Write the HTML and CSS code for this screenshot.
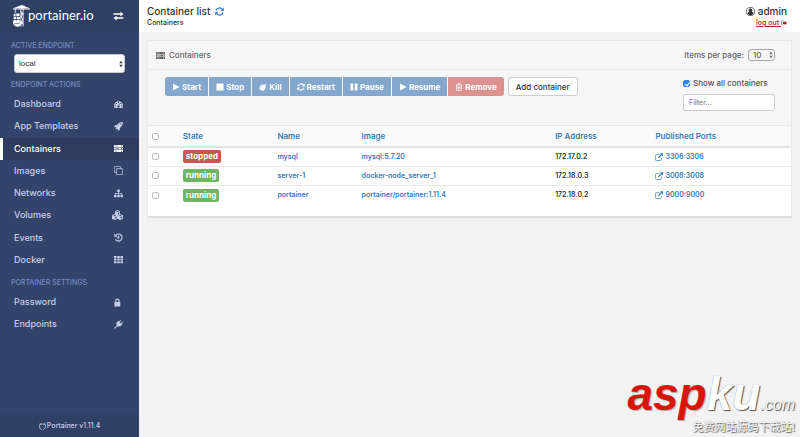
FILE: index.html
```html
<!DOCTYPE html>
<html lang="en">
<head>
<meta charset="utf-8">
<title>Portainer - Container list</title>
<link rel="stylesheet" href="styles.css">
</head>
<body>
<svg class="sprite" aria-hidden="true">
  <symbol id="i-swap" viewBox="0 0 16 16"><path d="M0 3.500h11V1l5 3.800-5 3.800V6H0zM16 12.500H5V15l-5-3.800 5-3.800V10h11z"/></symbol>
  <symbol id="i-dash" viewBox="0 0 16 16"><path fill-rule="evenodd" d="M8 2a8 8 0 0 0-8 8c0 1.600.5 3 1.200 4.300h13.600C15.500 13 16 11.600 16 10a8 8 0 0 0-8-8zM8 3.200a1.100 1.100 0 1 1 0 2.200 1.100 1.100 0 0 1 0-2.200zM4 5a1.100 1.100 0 1 1 0 2.200A1.100 1.100 0 0 1 4 5zm8 0a1.100 1.100 0 1 1 0 2.200A1.100 1.100 0 0 1 12 5zM2.300 9a1.100 1.100 0 1 1 0 2.200 1.100 1.100 0 0 1 0-2.200zm11.400 0a1.100 1.100 0 1 1 0 2.200 1.100 1.100 0 0 1 0-2.200zM9 6.400l1 .3-.9 3.400a1.900 1.900 0 1 1-1-.3z"/></symbol>
  <symbol id="i-rocket" viewBox="0 0 16 16"><path fill-rule="evenodd" d="M15.800.2C11 0 8.500 1.800 5.800 5.200L2.500 5.500 0 9.300l3.300-.2.700.9-1.500 3.500L6 12l.9.700-.2 3.300 3.800-2.500.3-3.300C14.200 7.500 16 5 15.800.2zM12.500 2.400a1.200 1.200 0 1 1 0 2.400 1.200 1.200 0 0 1 0-2.400z"/></symbol>
  <symbol id="i-server" viewBox="0 0 18 16"><path fill-rule="evenodd" d="M0 1h18v4H0zm0 5h18v4H0zm0 5h18v4H0zM2 2.500v1h5v-1zm0 5v1h8v-1zm0 5v1h5v-1zM15 2a1 1 0 1 0 0 2 1 1 0 0 0 0-2zm0 5a1 1 0 1 0 0 2 1 1 0 0 0 0-2zm0 5a1 1 0 1 0 0 2 1 1 0 0 0 0-2z"/></symbol>
  <symbol id="i-copy" viewBox="0 0 16 16"><path fill="none" stroke="currentColor" stroke-width="1.300" d="M4.500 11.500H1.200a.6.600 0 0 1-.6-.6V1.200c0-.3.300-.6.600-.6h9.600c.4 0 .7.300.7.600v3.300M5.200 4.600h9.500c.4 0 .7.300.7.600v9.500c0 .4-.3.700-.7.700H5.200a.6.600 0 0 1-.7-.7V5.200c0-.3.300-.6.700-.6z"/></symbol>
  <symbol id="i-tree" viewBox="0 0 16 16"><path d="M5.800 1h4.400v4.200H8.700v2.100h5.700v3.200H16v4.200h-4.500v-4.200h1.600V8.600H8.700v1.900h1.500v4.200H5.800v-4.200h1.500V8.600H2.900v1.900h1.600v4.200H0v-4.200h1.600V7.300h5.700V5.200H5.800z"/></symbol>
  <symbol id="i-cubes" viewBox="0 0 18 16"><path fill-rule="evenodd" d="M9 0l4 1.700v4.600l5 2.200V14l-4.500 2L9 14l-4.500 2L0 14V8.500l5-2.200V1.700zM9 1.300L6.500 2.400 9 3.500l2.500-1.100zM9.700 4.700v2.800l2-.9V3.800zM4.500 8L2 9.100l2.500 1.100L7 9.100zm9 0L11 9.100l2.500 1.100L16 9.100zM5.200 11.400v2.800l2.500-1.100v-2.800zm9 0v2.800l2.500-1.100v-2.800z"/></symbol>
  <symbol id="i-history" viewBox="0 0 16 16"><path fill="none" stroke="currentColor" stroke-width="2" d="M3 4.200A6.300 6.300 0 1 1 2.600 11.300M8.300 4.500v4.200H5.200"/><path d="M.5 1v5.600h5.700z"/></symbol>
  <symbol id="i-grid" viewBox="0 0 18 16"><path d="M0 1h5v4H0zm6.500 0h5v4h-5zM13 1h5v4h-5zM0 6.200h5v4H0zm6.500 0h5v4h-5zm6.500 0h5v4h-5zM0 11.400h5v4H0zm6.500 0h5v4h-5zm6.500 0h5v4h-5z"/></symbol>
  <symbol id="i-lock" viewBox="0 0 16 16"><path fill-rule="evenodd" d="M2 7V5a4 4 0 0 1 8 0v2h1.200v8H.8V7zm2 0h4V5a2 2 0 0 0-4 0z"/></symbol>
  <symbol id="i-plug" viewBox="0 0 16 16"><path d="M11.200 0l1.300 1.300-2.700 2.600 2.300 2.300 2.600-2.700L16 4.800l-2.600 2.700 1 1-1.200 1.300c-2 2-4.800 2.400-7 1.300L3 14.300C2 15.300 1 15.500 0 16c.5-1 .7-2 1.700-3l3.200-3.200c-1.100-2.200-.7-5 1.300-7l1.300-1.200 1 1z"/></symbol>
  <symbol id="i-cat" viewBox="0 0 16 16"><path fill="none" stroke="currentColor" stroke-width="2.200" d="M6 14.700C2.800 13.600 1.200 11.200 1.200 8.300c0-1.900.5-2.900 1.200-4L2.300 1.500l2.800 1.200c2-.5 3.800-.5 5.800 0l2.800-1.200-.1 2.800c.7 1.100 1.200 2.100 1.200 4 0 2.900-1.600 5.300-4.800 6.400"/></symbol>
  <symbol id="i-refresh" viewBox="0 0 16 16"><path fill="none" stroke="currentColor" stroke-width="2.200" d="M1.700 6.600a6.500 6.500 0 0 1 11.400-2.400M14.300 9.400A6.500 6.500 0 0 1 2.900 11.800"/><path d="M15.700 1v6H9.800zM.3 15V9h5.900z"/></symbol>
  <symbol id="i-play" viewBox="0 0 14 16"><path d="M1 1l13 7-13 7z"/></symbol>
  <symbol id="i-stop" viewBox="0 0 16 16"><path d="M1 1h14v14H1z"/></symbol>
  <symbol id="i-bomb" viewBox="0 0 16 16"><path fill-rule="evenodd" d="M9.700 3.500l1.100-1.100 1.200 1.100 1.200-1.200.7.700-1.200 1.200 1.100 1.100-1.100 1.200A6.300 6.300 0 1 1 9.700 3.500zM2.700 9.200h1.200c0-1.800 1.200-3 3-3V5C4.500 5 2.700 6.800 2.700 9.200z"/><path d="M13.300 0h.8v1.700h-.8zM14.500 2l1-1 .5.500-1 1zM14.600 3h1.400v.8h-1.400z"/></symbol>
  <symbol id="i-pause" viewBox="0 0 16 16"><path d="M1 1h5.500v14H1zm8.500 0H15v14H9.500z"/></symbol>
  <symbol id="i-trash" viewBox="0 0 16 16"><path fill="none" stroke="currentColor" stroke-width="1.500" d="M1.500 3.700h13M5.500 3.400l.8-2.300h3.400l.8 2.300M3 4v10.200c0 .6.300 1 .8 1h8.400c.5 0 .8-.4.800-1V4M6 6.500v6M8 6.500v6M10 6.500v6"/></symbol>
  <symbol id="i-user" viewBox="0 0 16 16"><circle cx="8" cy="8" r="7.200" fill="none" stroke="currentColor" stroke-width="1.300"/><path d="M8 2.700a3.200 3.200 0 0 1 2 5.800c2 .2 3 1.500 3.200 3.700a7 7 0 0 1-10.400 0C3 10 4 8.700 6 8.500a3.200 3.200 0 0 1 2-5.800z"/></symbol>
  <symbol id="i-out" viewBox="0 0 16 16"><path fill="none" stroke="currentColor" stroke-width="1.500" d="M6.500 2.500H3A2 2 0 0 0 1 4.500v7a2 2 0 0 0 2 2h3.500"/><path d="M10 2l6 6-6 6v-3.500H5v-5h5z"/></symbol>
  <symbol id="i-ext" viewBox="0 0 16 16"><path fill="none" stroke="currentColor" stroke-width="1.400" d="M9 3.200H3A2.200 2.200 0 0 0 .8 5.400v7.400A2.200 2.200 0 0 0 3 15h7.500a2.200 2.200 0 0 0 2.200-2.200V9.500"/><path d="M10 .5h6v6l-2.100-2.100-6.300 6.300-1.700-1.700 6.300-6.300z"/></symbol>
  <symbol id="i-arrows" viewBox="0 0 6 10"><path d="M3 0l2.500 4h-5zM3 10L.5 6h5z"/></symbol>
</svg>

<div class="app">
  <aside class="sidebar">
    <div class="brand">
      <a class="logo" href="#" aria-label="portainer.io">
        <svg class="crane" viewBox="0 0 26 34" fill="none" stroke="#fff" aria-hidden="true">
          <path stroke-width="1.200" d="M0 6.500h26M1 5.500L13 1l12 4.500M13 0v6M16.500 0v6M12 6v27M15.500 6v27M12 10l3.500 4L12 18l3.500 4-3.500 4 3.500 4M3.500 6.500V13"/>
          <path fill="#fff" stroke="none" d="M1 14h3v3H1zm4-1h5v4H5zM1 18h4v4H1zm5 0h5v4H6zM0 25c2-3 4-2 5-1 2-2 5-1 6 1 2 0 3 2 2 4-1 4-5 5-8 4-3-1-6-4-5-8z"/>
          <path stroke="#33446b" d="M2 28c3 1 6 1 9-1"/>
        </svg>
        <span>portainer.io</span>
      </a>
      <svg class="icon wide"><use href="#i-swap"/></svg>
    </div>
    <label class="side-title" for="endpoint">ACTIVE ENDPOINT</label>
    <div class="select endpoint">
      <select id="endpoint"><option>local</option></select>
      <svg class="arrows"><use href="#i-arrows"/></svg>
    </div>
    <h2 class="side-title">ENDPOINT ACTIONS</h2>
    <nav class="menu menu-main">
      <a href="#">Dashboard<svg class="icon"><use href="#i-dash"/></svg></a>
      <a href="#">App Templates<svg class="icon"><use href="#i-rocket"/></svg></a>
      <a href="#" class="active">Containers<svg class="icon"><use href="#i-server"/></svg></a>
      <a href="#">Images<svg class="icon"><use href="#i-copy"/></svg></a>
      <a href="#">Networks<svg class="icon"><use href="#i-tree"/></svg></a>
      <a href="#">Volumes<svg class="icon wide"><use href="#i-cubes"/></svg></a>
      <a href="#">Events<svg class="icon"><use href="#i-history"/></svg></a>
      <a href="#">Docker<svg class="icon"><use href="#i-grid"/></svg></a>
    </nav>
    <h2 class="side-title">PORTAINER SETTINGS</h2>
    <nav class="menu">
      <a href="#">Password<svg class="icon"><use href="#i-lock"/></svg></a>
      <a href="#">Endpoints<svg class="icon"><use href="#i-plug"/></svg></a>
    </nav>
    <footer class="version"><svg class="icon-s"><use href="#i-cat"/></svg>Portainer v1.11.4</footer>
  </aside>

  <main class="main">
    <header class="top">
      <div>
        <h1>Container list <a href="#" aria-label="Refresh"><svg class="icon"><use href="#i-refresh"/></svg></a></h1>
        <div class="crumb">Containers</div>
      </div>
      <div class="account">
        <div class="user"><svg class="icon"><use href="#i-user"/></svg>admin</div>
        <a class="logout" href="#">log out <svg class="icon-s"><use href="#i-out"/></svg></a>
      </div>
    </header>

    <section class="panel">
      <div class="panel-head">
        <h2><svg class="icon"><use href="#i-server"/></svg>Containers</h2>
        <div class="paging">
          <label for="per-page">Items per page:</label>
          <div class="select per-page">
            <select id="per-page"><option>10</option></select>
            <svg class="arrows"><use href="#i-arrows"/></svg>
          </div>
        </div>
      </div>
      <div class="toolbar">
        <div class="actions">
          <div class="group">
            <button type="button" disabled><svg class="icon-s"><use href="#i-play"/></svg>Start</button>
            <button type="button" disabled><svg class="icon-s"><use href="#i-stop"/></svg>Stop</button>
            <button type="button" disabled><svg class="icon-s"><use href="#i-bomb"/></svg>Kill</button>
            <button type="button" disabled><svg class="icon-s"><use href="#i-refresh"/></svg>Restart</button>
            <button type="button" disabled><svg class="icon-s"><use href="#i-pause"/></svg>Pause</button>
            <button type="button" disabled><svg class="icon-s"><use href="#i-play"/></svg>Resume</button>
            <button type="button" disabled class="danger"><svg class="icon-s"><use href="#i-trash"/></svg>Remove</button>
          </div>
          <button type="button" class="add">Add container</button>
        </div>
        <div class="filters">
          <label><input type="checkbox" checked>Show all containers</label>
          <input type="text" placeholder="Filter..." aria-label="Filter">
        </div>
      </div>
      <table>
        <thead>
          <tr>
            <th class="c-check"><input type="checkbox" aria-label="Select all"></th>
            <th class="c-state"><a href="#">State</a></th>
            <th class="c-name"><a href="#">Name</a></th>
            <th class="c-image"><a href="#">Image</a></th>
            <th class="c-ip"><a href="#">IP Address</a></th>
            <th><a href="#">Published Ports</a></th>
          </tr>
        </thead>
        <tbody>
          <tr>
            <td><input type="checkbox" aria-label="Select mysql"></td>
            <td><span class="badge stopped">stopped</span></td>
            <td><a href="#">mysql</a></td>
            <td><a href="#">mysql:5.7.20</a></td>
            <td>172.17.0.2</td>
            <td><a href="#"><svg class="icon-s"><use href="#i-ext"/></svg>3306:3306</a></td>
          </tr>
          <tr>
            <td><input type="checkbox" aria-label="Select server-1"></td>
            <td><span class="badge">running</span></td>
            <td><a href="#">server-1</a></td>
            <td><a href="#">docker-node_server_1</a></td>
            <td>172.18.0.3</td>
            <td><a href="#"><svg class="icon-s"><use href="#i-ext"/></svg>3008:3008</a></td>
          </tr>
          <tr>
            <td><input type="checkbox" aria-label="Select portainer"></td>
            <td><span class="badge">running</span></td>
            <td><a href="#">portainer</a></td>
            <td><a href="#">portainer/portainer:1.11.4</a></td>
            <td>172.18.0.2</td>
            <td><a href="#"><svg class="icon-s"><use href="#i-ext"/></svg>9000:9000</a></td>
          </tr>
        </tbody>
      </table>
    </section>
  </main>
</div>

<div class="watermark">
  <div class="wm-name"><span class="wm-red">asp</span><span class="wm-white">ku</span><span class="wm-com">.com</span></div>
  <div class="wm-text" lang="zh-CN">免费网站源码下载站!</div>
</div>
</body>
</html>
```

FILE: styles.css
```css
* { box-sizing: border-box; }

body {
  margin: 0;
  background: #f2f2f2;
  color: #333;
  font: 500 8px/12px Inter, "Liberation Sans", sans-serif;
}

h1, h2 { margin: 0; font: inherit; }
a { color: #337ab7; text-decoration: none; }
button, input, select { margin: 0; font: inherit; color: inherit; }
svg { fill: currentColor; flex: none; }
.sprite { display: none; }
.icon { width: 9px; height: 9px; }
.icon.wide { width: 11px; height: 10px; }
.icon-s { width: 8px; height: 8px; vertical-align: middle; }

.app { display: flex; min-height: 100vh; }

/* Sidebar */
.sidebar {
  display: flex;
  flex-direction: column;
  width: 139px;
  flex: none;
  background: #33446b;
  color: #c4cfea;
}
.brand {
  display: flex;
  align-items: center;
  justify-content: space-between;
  height: 32px;
  margin-bottom: 2px;
  padding: 0 15px 0 13px;
  background: #2f4065;
  color: #fff;
}
.logo { display: flex; align-items: flex-start; color: #fff; font: 13px/22px Lato, sans-serif; }
.logo span { margin-left: -2px; }
.crane { width: 17px; height: 24px; }
.side-title { padding: 6px 11px 2px; color: #738bc0; font-size: 7px; line-height: 12px; }
.select { display: flex; align-items: center; position: relative; }
.select select {
  appearance: none;
  width: 100%;
  padding: 0 5px;
  border: 1px solid #ccc;
  border-radius: 3px;
  background: #fff;
  outline: 0;
}
.arrows { position: absolute; right: 2px; width: 4px; height: 8px; pointer-events: none; }
.endpoint { margin: 0 14px; color: #333; }
.endpoint select { height: 19px; font: 8px "Liberation Sans", sans-serif; padding: 0 4px; }
.menu { display: grid; grid-auto-rows: 22px; padding-bottom: 2px; }
.menu-main { grid-auto-rows: 1fr; height: 178px; padding: 0; }
.menu a {
  display: flex;
  align-items: center;
  justify-content: space-between;
  padding: 0 16px 0 11px;
  border-left: 3px solid transparent;
  color: inherit;
  font-size: 9px;
}
.menu a.active { border-color: #fff; background: #2d3c5f; color: #fff; }
.version {
  display: flex;
  align-items: center;
  justify-content: center;
  gap: 1px;
  height: 22px;
  margin-top: auto;
  background: #2f4065;
  font-size: 7px;
}
.version .icon-s { width: 7px; height: 7px; }

/* Page header */
.main { flex: 1; min-width: 0; }
.top {
  display: flex;
  justify-content: space-between;
  height: 32px;
  padding: 5px 13px 0 8px;
  background: #fff;
}
h1 { display: flex; align-items: center; gap: 5px; font-size: 10px; }
h1 a { display: flex; }
.crumb { font-size: 7px; }
.account { text-align: right; }
.user { display: flex; align-items: center; gap: 3px; font-size: 10px; }
.logout { color: #a02622; font-size: 7px; text-decoration: underline; display: block; }
.logout .icon-s { width: 6px; }

/* Container list */
.panel {
  margin: 8px;
  padding-bottom: 11px;
  border: 1px solid #e9e9e9;
  border-bottom: 2px solid #e0e0e0;
  background: #fff;
}
.panel-head {
  display: flex;
  align-items: center;
  justify-content: space-between;
  height: 29px;
  padding: 0 16px 0 8px;
  border-bottom: 1px solid #e9e9e9;
  background: #f6f6f6;
  color: #666;
}
.panel-head h2, .paging { display: flex; align-items: center; gap: 4px; }
.per-page { width: 27px; }
.per-page select { height: 12px; border-color: #aaa; background: #f6f6f6; padding: 0 4px; line-height: 10px; }
.toolbar {
  display: flex;
  justify-content: space-between;
  align-items: flex-start;
  height: 56px;
  padding: 7px 16px 0 17px;
  border-bottom: 1px solid #e9e9e9;
  background: #f6f6f6;
}
.actions, .group { display: flex; }
.actions { gap: 4px; }
.group { gap: 1px; border-radius: 3px; overflow: hidden; }
button {
  display: flex;
  align-items: center;
  gap: 2px;
  height: 19px;
  padding: 0 7px;
  border: 0;
  background: #84a7cd;
  color: #fff;
}
.group button { color: #fff; font-weight: 700; }
.group button.danger { background: #dc928f; }
button.add { border: 1px solid #ccc; border-radius: 3px; background: #fff; color: #333; }
.filters { display: flex; flex-direction: column; gap: 5px; width: 92px; color: #555; }
.filters label { display: flex; align-items: center; gap: 3px; white-space: nowrap; }
input[type="text"] {
  width: 100%;
  height: 17px;
  padding: 0 5px;
  border: 1px solid #ccc;
  border-radius: 2px;
  background: #fff;
  font-size: 7px;
}
input::placeholder { color: #888; }
input[type="checkbox"] {
  appearance: none;
  display: block;
  flex: none;
  width: 7px;
  height: 7px;
  border: 1px solid #bbb;
  border-radius: 2px;
  background: #fff;
}
input[type="checkbox"]:checked { border-color: #2d83f0; background: #2d83f0; }
input[type="checkbox"]:checked::after {
  content: "";
  display: block;
  width: 2px;
  height: 4px;
  margin-left: 2px;
  border: solid #fff;
  border-width: 0 1px 1px 0;
  transform: rotate(40deg);
}
table { width: 100%; border-collapse: collapse; table-layout: fixed; }
th, td { padding: 0 4px; text-align: left; white-space: nowrap; font-weight: 600; }
th { height: 21px; border-bottom: 2px solid #e4e4e4; background: #fafafa; }
td { height: 19px; border-bottom: 1px solid #e9e9e9; font-size: 7px; }
tbody tr:last-child td { height: 20px; border-bottom: 0; }
td .icon-s { margin-right: 2px; }
.c-check { width: 4.8%; }
.c-state { width: 14.7%; }
.c-name { width: 13.1%; }
.c-image { width: 30.1%; }
.c-ip { width: 15.6%; }
.badge {
  display: inline-block;
  padding: 0 3px;
  border-radius: 2px;
  background: #6fb562;
  color: #fff;
  font-size: 8px;
  line-height: 13px;
  vertical-align: middle;
  font-weight: 700;
}
.badge.stopped { background: #c9564f; }

/* Site mark over the lower right corner */
.watermark {
  position: absolute;
  right: 5px;
  bottom: 4px;
  text-align: right;
  color: #fff;
  text-shadow: 1px 1px 1px #555, 0 0 1px #999;
}
.wm-name { font: italic 700 46px/28px "Liberation Sans", sans-serif; }
.wm-red { color: #d8150b; text-shadow: 1px 1px 1px #aaa; }
.wm-com { font-size: 16px; font-weight: 400; }
.wm-text { position: relative; font: 11px/14px "Noto Sans CJK SC", sans-serif; }
```
